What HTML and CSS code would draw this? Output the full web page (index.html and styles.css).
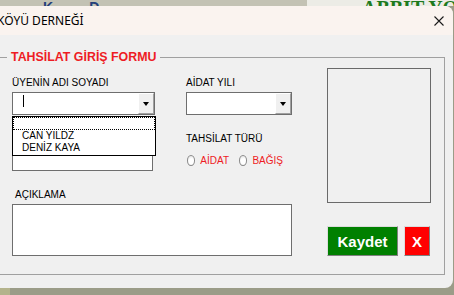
FILE: index.html
```html
<!DOCTYPE html>
<html lang="tr">

<head>
    <meta charset="UTF-8">
    <title>KÖYÜ DERNEĞİ</title>
    <link rel="stylesheet" href="styles.css">
</head>

<body>
    <div class="sheet">
        <div class="sheet-left"><span>K</span><span class="sheet-d">D</span></div>
        <div class="sheet-right">ABBIT YOT</div>
    </div>

    <div class="window">
        <div class="titlebar">
            <span class="title">KÖYÜ DERNEĞİ</span>
            <svg class="close" width="10" height="10" viewBox="0 0 10 10">
                <path d="M0.5 0.5 L9.5 9.5 M9.5 0.5 L0.5 9.5" stroke="#1a1a1a" stroke-width="1.1" fill="none" />
            </svg>
        </div>

        <div class="window-body">
            <fieldset class="frame">
                <legend>TAHSİLAT GİRİŞ FORMU</legend>
                <div class="frame-body">
                    <div class="fields">
                        <div class="row">
                            <div class="field field-name">
                                <div class="label">ÜYENİN ADI SOYADI</div>
                                <div class="combo">
                                    <span class="combo-text"><span class="caret"></span></span>
                                    <span class="combo-btn"><span class="arrow"></span></span>
                                </div>
                                <!-- open list of the name combo -->
                                <div class="dropdown">
                                    <div class="dropdown-item focused"></div>
                                    <div class="dropdown-item">CAN YILDZ</div>
                                    <div class="dropdown-item">DENİZ KAYA</div>
                                </div>
                            </div>
                            <div class="field field-year">
                                <div class="label">AİDAT YILI</div>
                                <div class="combo">
                                    <span class="combo-text"></span>
                                    <span class="combo-btn"><span class="arrow"></span></span>
                                </div>
                            </div>
                        </div>

                        <div class="row">
                            <div class="field field-name">
                                <div class="textbox"></div>
                            </div>
                            <div class="field field-year">
                                <div class="label label-type">TAHSİLAT TÜRÜ</div>
                                <div class="radios">
                                    <span class="radio"></span>
                                    <span class="radio-text">AİDAT</span>
                                    <span class="radio"></span>
                                    <span class="radio-text">BAĞIŞ</span>
                                </div>
                            </div>
                        </div>

                        <div class="note">
                            <div class="label">AÇIKLAMA</div>
                            <div class="note-box"></div>
                        </div>
                    </div>

                    <div class="side">
                        <div class="picture"></div>
                        <div class="buttons">
                            <button class="btn btn-save">Kaydet</button>
                            <button class="btn btn-close">X</button>
                        </div>
                    </div>
                </div>
            </fieldset>
        </div>
    </div>

    <div class="sheet-bottom">
        <div class="sheet-bottom-edge"></div>
    </div>
</body>

</html>
```

FILE: styles.css
```css
body {
    margin: 0;
    width: 454px;
    height: 295px;
    overflow: hidden;
    background-color: #9b9c88;
    font-family: 'Liberation Sans', Arial, sans-serif;
    color: #000;
}

/* excel sheet behind the form */
.sheet {
    height: 6px;
    display: flex;
    overflow: hidden;
}

.sheet-left {
    width: 307px;
    background-color: #c3c2b4;
    color: #23407a;
    font: bold 14px/15px 'Liberation Sans', sans-serif;
    padding-left: 43px;
    box-sizing: border-box;
}

.sheet-d {
    margin-left: 36px;
}

.sheet-right {
    flex: 1;
    background-color: #ecece6;
    color: #1d7a1d;
    font: bold 20px/16px 'Liberation Serif', serif;
    padding-left: 55px;
    white-space: nowrap;
    overflow: hidden;
}

.sheet-bottom {
    height: 7px;
}

.sheet-bottom-edge {
    width: 10px;
    height: 7px;
    background-color: #b4b38c;
}

/* userform window */
.window {
    width: 453px;
    height: 282px;
    background-color: #f0f0f0;
    border-radius: 0 8px 8px 0;
    overflow: hidden;
    display: flex;
    flex-direction: column;
}

.titlebar {
    height: 29px;
    flex-shrink: 0;
    background-color: #faf3ef;
    display: flex;
    align-items: center;
    justify-content: space-between;
    padding-right: 9px;
}

.title {
    font: 12px 'Noto Sans', sans-serif;
    margin-left: -3px;
}

.window-body {
    padding: 15px 8px 0 0;
}

.frame {
    margin: 0 0 0 -4px;
    border: 1px solid #a0a0a0;
    padding: 0 13px 18px 15px;
}

.frame legend {
    font: bold 12.4px/14px 'Liberation Sans', sans-serif;
    color: #ee1c24;
    padding: 0 4px;
    margin-left: -5px;
}

.frame-body {
    display: flex;
    gap: 35px;
}

.fields {
    width: 280px;
    padding-top: 12px;
}

.row {
    display: flex;
}

.field {
    position: relative;
}

.field-name {
    width: 143px;
}

.field-year {
    width: 106px;
    margin-left: 31px;
}

.label {
    font-size: 10px;
    line-height: 13px;
    height: 13px;
    white-space: nowrap;
}

.combo {
    margin-top: 3px;
    height: 23px;
    box-sizing: border-box;
    border: 1px solid #6e6e6e;
    background-color: #fff;
    display: flex;
}

.combo-text {
    flex: 1;
    padding: 2px 0 0 10px;
}

.caret {
    display: block;
    width: 1px;
    height: 12px;
    background-color: #000;
}

.combo-btn {
    width: 16px;
    box-sizing: border-box;
    background-color: #f0f0f0;
    border: 1px solid;
    border-color: #fff #a0a0a0 #a0a0a0 #fff;
    display: flex;
    align-items: center;
    justify-content: center;
}

.arrow {
    width: 0;
    height: 0;
    border-left: 3.5px solid transparent;
    border-right: 3.5px solid transparent;
    border-top: 4px solid #000;
    margin-top: 1px;
}

.dropdown {
    position: absolute;
    top: 40px;
    left: 0;
    width: 144px;
    box-sizing: border-box;
    border: 1px solid #000;
    background-color: #fff;
    padding-bottom: 1px;
    z-index: 2;
}

.dropdown-item {
    font-size: 10px;
    line-height: 12px;
    height: 12px;
    padding-left: 9px;
}

.dropdown-item.focused {
    height: 13px;
    box-sizing: border-box;
    border: 1px dotted #000;
}

.textbox {
    margin-top: 34px;
    width: 141px;
    height: 22px;
    box-sizing: border-box;
    border: 1px solid #6e6e6e;
    background-color: #fff;
}

.label-type {
    margin-top: 17px;
}

.radios {
    display: flex;
    align-items: center;
    height: 14px;
    margin-top: 8px;
    font-size: 10px;
    color: #ee1c24;
}

.radio {
    width: 11px;
    height: 11px;
    box-sizing: border-box;
    border: 1px solid #8a8a8a;
    border-radius: 50%;
    background: radial-gradient(circle at 60% 60%, #fff 40%, #dcdcdc 100%);
    margin-left: 1px;
}

.radio-text {
    margin-left: 5px;
    margin-right: 9px;
}

.note .label {
    margin-top: 17px;
    padding-left: 3px;
}

.note-box {
    margin-top: 3px;
    height: 52px;
    box-sizing: border-box;
    border: 1px solid #6e6e6e;
    background-color: #fff;
}

.side {
    width: 104px;
    display: flex;
    flex-direction: column;
}

.picture {
    margin-top: 4px;
    height: 135px;
    box-sizing: border-box;
    border: 1px solid #6a6a6a;
}

.buttons {
    margin-top: auto;
    display: flex;
    gap: 6px;
}

.btn {
    height: 30px;
    box-sizing: border-box;
    border: 1px solid;
    border-color: #dcdcdc #808080 #808080 #dcdcdc;
    color: #fff;
    font: bold 15px 'Liberation Sans', sans-serif;
    padding: 0;
}

.btn-save {
    width: 71px;
    background-color: #008000;
}

.btn-close {
    width: 26px;
    background-color: #ff0000;
}
```
